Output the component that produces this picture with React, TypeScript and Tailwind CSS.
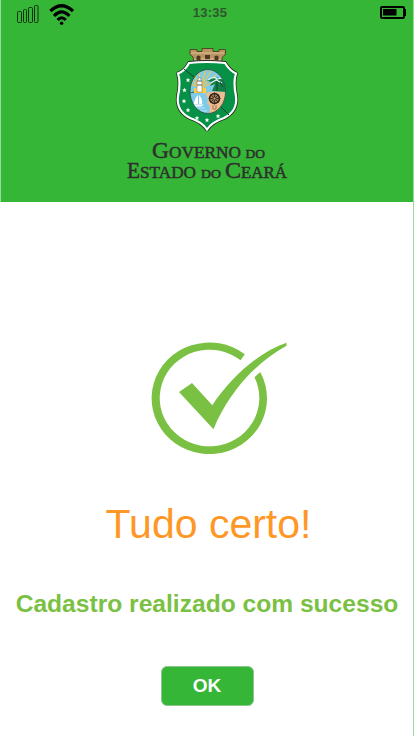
function Signal() {
  return (
    <svg className="block" width="24" height="20" viewBox="0 0 24 20" fill="none" stroke="#10300f" strokeWidth="1">
      <rect x="2.500" y="7.500" width="4" height="11" rx="1" />
      <rect x="8.500" y="5.500" width="3" height="13" rx="1" />
      <rect x="13.500" y="3.500" width="4" height="15" rx="1" />
      <rect x="19.500" y="1.500" width="3.500" height="17" rx="1" />
    </svg>
  );
}

function Wifi() {
  return (
    <svg className="block" width="25" height="22" viewBox="0 0 25 22" fill="none" stroke="#000" strokeWidth="3.200">
      <path d="M1.400 7Q12.500-3.600 24 7" />
      <path d="M5 12Q12.500 3.800 20.400 12" />
      <path d="M8.600 16Q12.500 11.500 16.800 16" />
      <circle cx="12.600" cy="19.200" r="1.700" fill="#000" stroke="none" />
    </svg>
  );
}

function Battery() {
  return (
    <svg className="block" width="26" height="14" viewBox="0 0 26 14">
      <rect x="1" y="1" width="23" height="11" rx="1" fill="none" stroke="#000" strokeWidth="2" />
      <path d="M24 3h2v7h-2z" fill="#000" />
      <path d="M3 3h13.500v6.500H3z" fill="#000" />
    </svg>
  );
}

const stars: [number, number][] = [
  [18, 38], [14.500, 48], [14, 59], [18, 68], [27, 76], [37, 78], [48, 74],
];

const shield =
  "M8 31.500Q15 29 19 21Q37 19 55 21Q60 29 66 31.500Q63 40 66 54Q68 69 54 76Q42 80 37 87.500Q32 80 20 76Q6 69 8 54Q11 40 8 31.500z";

function Crest() {
  return (
    <svg className="block" width="76" height="94" viewBox="0 0 76 94">
      <path d="M20 7.500h7v2h5v-3h11v3h6v-2h6.500v5l-3 2.500-1 5.500Q37 18 24 20.500l-1-5.500-3-2.500z" fill="#b99563" stroke="#43351f" strokeWidth=".8" />
      <path d="M21 11h33M24 17.800q13.500-2 27 0" stroke="#dfc08e" strokeWidth="1.100" fill="none" />
      <path d="M26.500 18v-3.500q2-2 4 0V18M35 17v-4h5v4M44.500 18v-3.500q2-2 4 0V18" fill="#4f3823" />
      <path d={shield} fill="#059247" stroke="#222c27" strokeWidth="3.800" strokeLinejoin="round" />
      <path d={shield} fill="#059247" stroke="#fff" strokeWidth="2.200" />
      <path d="M14 27l10 8M51 65l8 8" stroke="#173f29" strokeWidth="1" />
      <clipPath id="scene"><ellipse cx="37.800" cy="49.500" rx="17.800" ry="22" /></clipPath>
      <g clipPath="url(#scene)">
        <path d="M19 27h38v46H19z" fill="#7ccbeb" />
        <path d="M28 45L19 41M28 45L20 35M28 45L24 29M29 44L30 27M31 44L36 27M31 44L42 28M31 45L46 33M31 46L42 41" stroke="#efc650" strokeWidth="1.300" />
        <path d="M35 51Q45 48 57 50V74H37Q43 66 37 61Q39 57 35 51z" fill="#edbd91" />
        <path d="M19 51Q27 47 37 51z" fill="#31784e" />
        <path d="M37 39q4-5 8-3 5-2 11 6v8l-14-1 3-7-5 2 2-4z" fill="#0e8045" />
        <path d="M38 38q6-4 9-1l5-1M41 41l5-3 6 3" stroke="#e2f5f8" strokeWidth="1.200" fill="none" />
        <path d="M47 39v10M50 40l3 5" stroke="#173a29" strokeWidth=".9" />
        <path d="M24 51v-5h12v5z" fill="#ffce40" />
        <path d="M27 50V39l2.500-4 2.500 4v11z" fill="#fff" stroke="#676858" strokeWidth=".5" />
        <path d="M27 39h5M27 43h5" stroke="#57605c" strokeWidth="1" />
        <path d="M28 53v9h-4q0-5 4-9zm1 0q4 4 3 9h-3zM22 62.500h12l-3 2h-7z" fill="#fff" />
        <path d="M21 66h14M25 69h12" stroke="#b9e4f1" strokeWidth="1" />
        <circle cx="44.500" cy="56.500" r="5" fill="#a77b51" stroke="#29231d" strokeWidth="1.500" />
        <path d="M38.500 56.500h12M44.500 50.500v12M40.500 52.500l8 8M48.500 52.500l-8 8" stroke="#312a21" strokeWidth=".9" />
        <circle cx="44.500" cy="56.500" r="1.500" fill="#dca66d" stroke="#27231d" strokeWidth=".8" />
        <path d="M43 63v4h3v-4" stroke="#aa7346" strokeWidth="1" fill="none" />
      </g>
      <ellipse cx="37.800" cy="49.500" rx="17.800" ry="22" fill="none" stroke="#31483c" strokeWidth=".8" />
      {stars.map(([x, y]) => (
        <path key={`${x}-${y}`} transform={`translate(${x} ${y})`} d="M0-2.200l.7 1.500L2.200-.6 1.100.5 1.400 2.200 0 1.300-1.400 2.200-1.100.5-2.200-.6-.7-.7z" fill="#f5fff7" />
      ))}
    </svg>
  );
}

function Wordmark() {
  return (
    <svg className="block font-['Liberation_Serif',serif]" width="174" height="48" viewBox="0 0 174 48" fill="#2d302d" stroke="#2d302d" strokeWidth=".5">
      <text x="32" y="23.500" fontSize="24" textLength="17" lengthAdjust="spacingAndGlyphs">G</text>
      <text x="49" y="23.500" fontSize="17" textLength="72" lengthAdjust="spacingAndGlyphs">OVERNO</text>
      <text x="125.500" y="23.500" fontSize="13" textLength="19.500" lengthAdjust="spacingAndGlyphs">DO</text>
      <text x="7" y="43.700" fontSize="24" textLength="13" lengthAdjust="spacingAndGlyphs">E</text>
      <text x="20" y="43.700" fontSize="17" textLength="56" lengthAdjust="spacingAndGlyphs">STADO</text>
      <text x="81" y="43.700" fontSize="13" textLength="20" lengthAdjust="spacingAndGlyphs">DO</text>
      <text x="105" y="43.700" fontSize="24" textLength="16" lengthAdjust="spacingAndGlyphs">C</text>
      <text x="121" y="43.700" fontSize="17" textLength="46" lengthAdjust="spacingAndGlyphs">EARÁ</text>
    </svg>
  );
}

function SuccessMark() {
  return (
    <svg className="block" width="160" height="140" viewBox="0 0 160 140" fill="#7ac143">
      <path d="M104.800 24.300A57.700 55.800 0 1 0 120.200 42L114.500 47.300A49.800 48.300 0 1 1 100.600 30.300Z" />
      <path d="M39 62L52 53L72.300 75.200C91 47 119 22 146.500 12.800V15.800C113 34 87 66 73.500 99.300Z" />
    </svg>
  );
}

export default function App() {
  return (
    <main className="flex h-[739px] w-[414px] flex-col overflow-hidden bg-white font-['Liberation_Sans',Arial,sans-serif]">
      <div className="flex h-[736px] flex-col border-r border-[#98dc9c]">
        <header className="flex h-[202px] shrink-0 flex-col items-center border-l border-[#98dc9c] bg-[#36b636]">
          <div className="grid h-[42px] w-full grid-cols-3 items-start">
            <div className="flex gap-[10px] pt-1 pl-[14px]"><Signal /><Wifi /></div>
            <time className="pt-[5px] pl-[6px] text-center text-[13px] leading-[15px] font-bold tracking-[.2px] text-[#305530]">13:35</time>
            <div className="flex justify-end pt-[6px] pr-[7px]"><Battery /></div>
          </div>
          <div className="h-[92px] pl-px"><Crest /></div>
          <Wordmark />
        </header>
        <section className="flex flex-col items-center pt-32">
          <div className="w-[133px]"><div className="w-[160px]"><SuccessMark /></div></div>
          <h1 className="mt-[31px] pl-1 text-[41px] leading-[46px] whitespace-nowrap text-[#ff9727]">Tudo certo!</h1>
          <p className="mt-[43px] pl-px text-[24.600px] leading-7 font-bold whitespace-nowrap text-[#7ac143]">Cadastro realizado com sucesso</p>
          <button className="mt-[48px] ml-px h-10 w-[93px] rounded-md border border-[#8dc58e] bg-[#36b636] text-[19px] leading-5 font-bold text-white">OK</button>
        </section>
      </div>
    </main>
  );
}
